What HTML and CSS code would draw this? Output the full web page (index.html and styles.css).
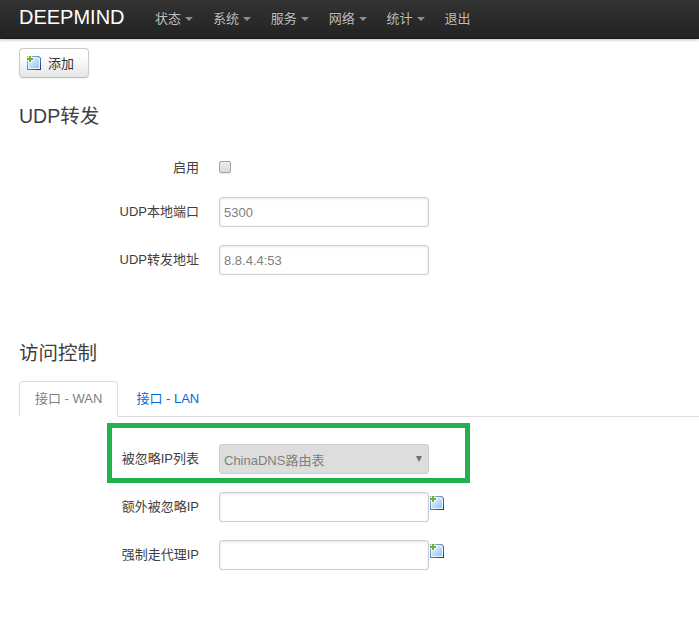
FILE: index.html
```html
<!DOCTYPE html>
<html lang="zh-CN">
<head>
<meta charset="utf-8">
<title>DEEPMIND</title>
<link rel="stylesheet" href="styles.css">
</head>
<body>
<svg width="0" height="0" class="defs" aria-hidden="true">
  <defs>
    <linearGradient id="paper" x1="0" y1="0" x2="1" y2="1">
      <stop offset="0" stop-color="#e3f2ff"/><stop offset="1" stop-color="#93c6f8"/>
    </linearGradient>
    <linearGradient id="edge" x1="0" y1="0" x2="1" y2="1">
      <stop offset="0" stop-color="#8db8e4"/><stop offset=".5" stop-color="#5d86b5"/><stop offset="1" stop-color="#1d3050"/>
    </linearGradient>
    <symbol id="add" viewBox="0 0 16 16">
      <path d="M1 2H13L15 4V16H1Z" fill="url(#edge)"/>
      <path d="M2 3H12.5L14 4.5V15H2Z" fill="#e8f4ff"/>
      <path d="M3 4H12V5H13V14H3Z" fill="url(#paper)"/>
      <path d="M11 3V6H14V4.5L12.5 3Z" fill="#d5e9fb"/>
      <path d="M0 3H2V1H6V3H8V7H6V9H2V7H0Z" fill="#fff" opacity=".6"/>
      <path d="M1 4H3V2H5V4H7V6H5V8H3V6H1Z" fill="#6eb02a"/>
    </symbol>
  </defs>
</svg>
<header class="navbar">
  <a class="brand">DEEPMIND</a>
  <nav class="nav">
    <a class="menu">状态</a><a class="menu">系统</a><a class="menu">服务</a><a class="menu">网络</a><a class="menu">统计</a><a>退出</a>
  </nav>
</header>
<main class="content">
  <button class="btn"><svg class="icon"><use href="#add"/></svg><span>添加</span></button>
  <section class="udp">
    <h3>UDP转发</h3>
    <div class="row check-row"><label for="enable">启用</label><input id="enable" class="check" type="checkbox"></div>
    <div class="row"><label for="port">UDP本地端口</label><input id="port" class="field" type="text" placeholder="5300"></div>
    <div class="row"><label for="addr">UDP转发地址</label><input id="addr" class="field" type="text" placeholder="8.8.4.4:53"></div>
  </section>
  <section class="access">
    <h3>访问控制</h3>
    <div class="tabs"><a class="tab active">接口 - WAN</a><a class="tab">接口 - LAN</a></div>
    <div class="row highlighted"><label>被忽略IP列表</label><div class="field select"><span>ChinaDNS路由表</span><svg class="arrow" viewBox="0 0 6 6"><path d="M0 0H6L3 6Z"/></svg></div></div>
    <div class="row"><label for="extra">额外被忽略IP</label><input id="extra" class="field" type="text"><svg class="icon"><use href="#add"/></svg></div>
    <div class="row"><label for="forced">强制走代理IP</label><input id="forced" class="field" type="text"><svg class="icon"><use href="#add"/></svg></div>
  </section>
</main>
</body>
</html>
```

FILE: styles.css
```css
* { box-sizing: border-box; }
body, button, input {
  font-family: "Liberation Sans", "Noto Sans CJK SC", sans-serif;
  font-size: 13px;
  line-height: 18px;
  color: #404040;
}
body { margin: 0; background: #fff; overflow: hidden; }
.defs { position: absolute; }
.navbar {
  display: flex;
  height: 39px;
  padding-left: 19px;
  background: linear-gradient(#333, #222);
  border-bottom: 1px solid #1b1b1b;
  box-shadow: 0 1px 3px rgba(0, 0, 0, .25);
}
.brand {
  width: 126px;
  padding-top: 7px;
  font-size: 20px;
  line-height: 20px;
  color: #fff;
}
.nav { display: flex; white-space: nowrap; }
.nav a {
  height: 38px;
  padding: 10px;
  color: #bfbfbf;
  text-shadow: 0 -1px 0 rgba(0, 0, 0, .25);
}
.nav .menu { display: flex; align-items: center; width: 57.9px; padding-right: 9px; }
.menu::after {
  content: "";
  margin: 0 0 0 4px;
  border: 4px solid transparent;
  border-top-color: #8d8d8d;
  border-bottom: 0;
}
.content { padding: 9px 0 0 19px; }
.btn {
  display: flex;
  align-items: center;
  width: 70px;
  height: 30px;
  padding: 0 0 0 6px;
  border: 1px solid #ccc;
  border-bottom-color: #bbb;
  border-radius: 4px;
  background: linear-gradient(#fff, #fff 25%, #e6e6e6);
  box-shadow: 0 1px 2px rgba(0, 0, 0, .05);
  color: #333;
}
.btn span { padding-top: 1px; }
.icon { flex: none; width: 16px; height: 16px; }
.btn .icon { margin: -2px 6px 0 0; }
h3 {
  margin: 0;
  height: 36px;
  font-size: 19.5px;
  font-weight: 400;
  line-height: 36px;
}
.udp { padding-top: 20px; height: 257px; }
.row { display: flex; height: 30px; margin-bottom: 18px; }
.row label { width: 180px; margin-right: 20px; padding-top: 6px; text-align: right; }
.check-row { margin-top: 19px; margin-bottom: 10px; height: 34px; }
.check {
  appearance: none;
  width: 12px;
  height: 12px;
  margin: 8px 0 0;
  border: 1px solid #a2a2a2;
  border-radius: 2px;
  background: linear-gradient(#ededed, #dcdcdc);
  box-shadow: 0 1px 1px rgba(0, 0, 0, .08);
}
.field {
  width: 210px;
  height: 30px;
  padding: 4px;
  border: 1px solid #ccc;
  border-radius: 3px;
  background: #fff;
  box-shadow: inset 0 1px 3px rgba(0, 0, 0, .1);
}
.field::placeholder { color: #808080; opacity: 1; }
.tabs { display: flex; height: 36px; margin-top: 10px; border-bottom: 1px solid #ddd; }
.tab {
  height: 36px;
  padding: 8px 15px;
  border: 1px solid transparent;
  border-radius: 4px 4px 0 0;
  margin-right: 2px;
  color: #0069d6;
}
.tab.active { border-color: #ddd; border-bottom-color: #fff; background: #fff; color: #808080; }
.highlighted {
  width: 363px;
  height: 60px;
  margin: 6px 0 9px 88px;
  padding: 16px 0 0;
  border: 5px solid #22b14c;
}
.highlighted label { width: 87px; }
.select {
  display: flex;
  align-items: center;
  justify-content: space-between;
  padding: 4px 6px 4px 4px;
  background: #ddd;
  box-shadow: none;
  color: #808080;
}
.select span { padding-top: 3px; }
.arrow { width: 6px; height: 6px; fill: #707070; }
.row > .icon { margin-top: 2px; }
```
